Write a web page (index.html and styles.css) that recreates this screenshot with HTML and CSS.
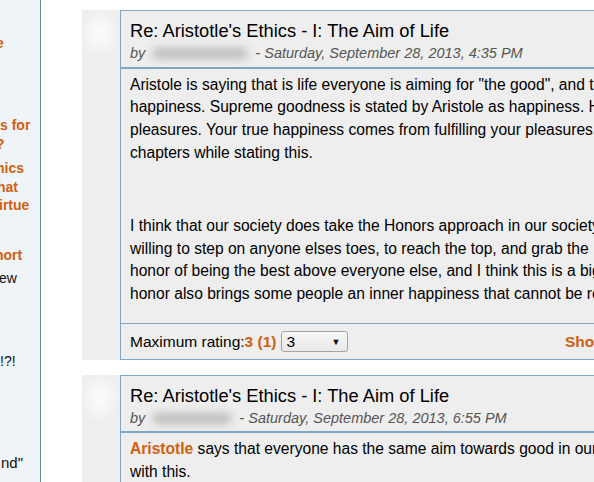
FILE: index.html
```html
<!DOCTYPE html>
<html lang="en">
<head>
<meta charset="utf-8">
<title>Forum discussion</title>
<link rel="stylesheet" href="styles.css">
</head>
<body>
<div class="page">
  <aside class="side">
    <div class="s-link s1 o1">e</div>
    <div class="s-link s2"><div>s for</div><div class="o2">?</div></div>
    <div class="s-link s3"><div class="o3">hics</div><div class="o4">hat</div><div class="o5">irtue</div></div>
    <div class="s-link s4 o6">hort</div>
    <div class="s-text s5 o7">ew</div>
    <div class="s-text s6">!?!</div>
    <div class="s-text s7 o8">nd"</div>
  </aside>
  <main class="main">
    <article class="post">
      <div class="post-side"><div class="avatar"></div></div>
      <div class="post-body">
        <div class="post-head">
          <div class="title">Re: Aristotle's Ethics - I: The Aim of Life</div>
          <div class="byline">by <span class="blur blur-a"></span> - Saturday, September 28, 2013, 4:35 PM</div>
        </div>
        <div class="content">
          <p>Aristole is saying that is life everyone is aiming for "the good", and the good<br>happiness. Supreme goodness is stated by Aristole as happiness. He says<br>pleasures. Your true happiness comes from fulfilling your pleasures. He<br>chapters while stating this.</p>
          <p>&nbsp;</p>
          <p>I think that our society does take the Honors approach in our society. We<br>willing to step on anyone elses toes, to reach the top, and grab the<br>honor of being the best above everyone else, and I think this is a big<br>honor also brings some people an inner happiness that cannot be reached.</p>
        </div>
        <div class="foot">
          <span>Maximum rating:<span class="rating">3 (1)</span></span>
          <span class="select"><span>3</span><span class="arrow">▼</span></span>
          <a class="cmd" href="#">Show parent</a>
        </div>
      </div>
    </article>
    <article class="post">
      <div class="post-side"><div class="avatar"></div></div>
      <div class="post-body">
        <div class="post-head">
          <div class="title">Re: Aristotle's Ethics - I: The Aim of Life</div>
          <div class="byline">by <span class="blur blur-b"></span> - Saturday, September 28, 2013, 6:55 PM</div>
        </div>
        <div class="content">
          <p><a class="link" href="#">Aristotle</a> says that everyone has the same aim towards good in our lives. I<br>with this.</p>
        </div>
      </div>
    </article>
  </main>
</div>
</body>
</html>
```
FILE: styles.css
```css
html, body {
  margin: 0;
  overflow: hidden;
}
body {
  font-family: "Liberation Sans", Arial, sans-serif;
  color: #000;
  background: #fff;
}
.page {
  display: flex;
  min-height: 482px;
}
.side {
  width: 40px;
  flex: none;
  background: #eef4f8;
  border-right: 1px solid #5f9585;
  overflow: hidden;
  padding-top: 34px;
  font-size: 14px;
  line-height: 18.5px;
  white-space: nowrap;
}
.s-link { color: #d0600e; font-weight: bold; }
.s-text { color: #111; }
.s2 { margin-top: 63.5px; }
.s3 { margin-top: 6px; }
.s4 { margin-top: 31.5px; }
.s5 { margin-top: 4.5px; }
.s6 { margin-top: 64.5px; }
.s7 { margin-top: 83.5px; }
.o1 { margin-left: -4px; }
.o2 { margin-left: -4px; }
.o3 { margin-left: -4px; }
.o4 { margin-left: -3px; }
.o5 { margin-left: -1px; }
.o6 { margin-left: -5px; }
.o7 { margin-left: -1px; }
.o8 { margin-left: 1px; font-size: 15px; }

.main {
  flex: none;
  padding: 10px 0 0 41px;
}
.post {
  display: flex;
  width: 587px;
  background: #eeeeee;
  margin-bottom: 15px;
}
.post-side {
  width: 38px;
  flex: none;
}
.avatar {
  width: 44px;
  height: 50px;
  margin: -2px 0 0 -4px;
  background: radial-gradient(ellipse 50% 50% at center, #fbfbfb 0%, rgba(251,251,251,0.7) 35%, rgba(251,251,251,0) 100%);
}
.post-body {
  flex: 1;
  border: 1px solid #7ea6c5;
}
.post-head {
  padding: 8px 10px 3.5px 9px;
  border-bottom: 2px solid #7ea6c5;
}
.title {
  font-size: 18.3px;
  line-height: 23px;
}
.byline {
  margin-top: 1px;
  font-size: 14.5px;
  line-height: 20px;
  font-style: italic;
  color: #555;
}
.blur {
  display: inline-block;
  height: 11px;
  vertical-align: -1px;
  background: #bdbdbd;
  filter: blur(4px);
  border-radius: 6px;
}
.blur-a { width: 96px; margin: 0 3px; }
.blur-b { width: 80px; margin: 0 3px; }
.content {
  padding: 5px 10px 3.5px 9px;
  font-size: 15.6px;
  line-height: 22.7px;
}
.content p {
  margin: 0 0 14px;
}
.link, .cmd {
  color: #d0600e;
  font-weight: bold;
  text-decoration: none;
}
.foot {
  display: flex;
  align-items: center;
  height: 34.5px;
  padding: 0 10px 0 9px;
  border-top: 1px solid #7ea6c5;
  font-size: 15.5px;
}
.rating {
  color: #d0600e;
  font-weight: bold;
}
.select {
  display: inline-flex;
  align-items: center;
  justify-content: space-between;
  box-sizing: border-box;
  width: 67px;
  height: 21px;
  margin-left: 5px;
  padding: 0 7px 0 4px;
  border: 1px solid #a5a5a5;
  border-radius: 3px;
  background: linear-gradient(#f7f7f7, #e9e9e9);
  font-size: 15.5px;
}
.arrow {
  font-size: 9px;
}
.cmd {
  margin-left: auto;
}
```
